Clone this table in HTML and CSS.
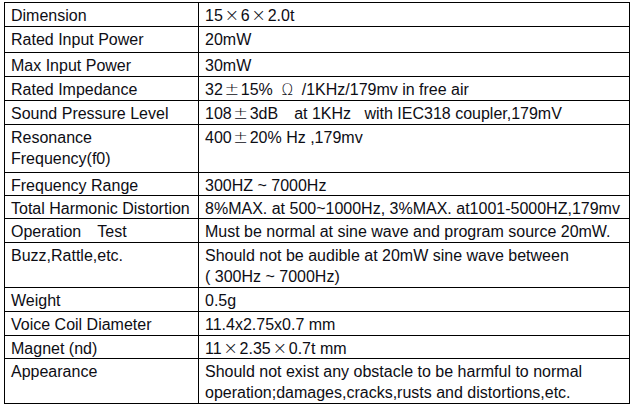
FILE: index.html
```html
<!DOCTYPE html>
<html lang="en">
<head>
<meta charset="utf-8">
<title>Specification</title>
<link rel="stylesheet" href="styles.css">
</head>
<body>
<div class="spec">
  <div class="cell r24">Dimension</div>
  <div class="cell r24">15<span class="fw">×</span>6<span class="fw">×</span>2.0t</div>

  <div class="cell r26">Rated Input Power</div>
  <div class="cell r26">20mW</div>

  <div class="cell r24">Max Input Power</div>
  <div class="cell r24">30mW</div>

  <div class="cell r24">Rated Impedance</div>
  <div class="cell r24">32<span class="fw">±</span>15% <span class="om">Ω</span> /1KHz/179mv in free air</div>

  <div class="cell r24">Sound Pressure Level</div>
  <div class="cell r24">108<span class="fw">±</span>3dB<span class="gap"></span>at 1KHz&nbsp;&nbsp; with IEC318 coupler,179mV</div>

  <div class="cell r48">Resonance<br>Frequency(f0)</div>
  <div class="cell r48">400<span class="fw">±</span>20% Hz ,179mv</div>

  <div class="cell r23">Frequency Range</div>
  <div class="cell r23">300HZ ~ 7000Hz</div>

  <div class="cell r23">Total Harmonic Distortion</div>
  <div class="cell r23">8%MAX. at 500~1000Hz, 3%MAX. at1001-5000HZ,179mv</div>

  <div class="cell r24">Operation<span class="gap"></span>Test</div>
  <div class="cell r24">Must be normal at sine wave and program source 20mW.</div>

  <div class="cell r45">Buzz,Rattle,etc.</div>
  <div class="cell r45">Should not be audible at 20mW sine wave between<br>( 300Hz ~ 7000Hz)</div>

  <div class="cell r24">Weight</div>
  <div class="cell r24">0.5g</div>

  <div class="cell r24">Voice Coil Diameter</div>
  <div class="cell r24">11.4x2.75x0.7 mm</div>

  <div class="cell r23">Magnet (nd)</div>
  <div class="cell r23">11<span class="fw">×</span>2.35<span class="fw">×</span>0.7t mm</div>

  <div class="cell r45">Appearance</div>
  <div class="cell r45">Should not exist any obstacle to be harmful to normal<br>operation;damages,cracks,rusts and distortions,etc.</div>
</div>
</body>
</html>
```

FILE: styles.css
```css
html, body {
  margin: 0;
  padding: 0;
  background: #ffffff;
}

body {
  font-family: "Liberation Sans", Arial, "Noto Sans CJK SC", sans-serif;
  font-size: 16px;
  line-height: 21px;
  color: #0d0d14;
}

.spec {
  display: grid;
  grid-template-columns: 194px 431px;
  width: 626px;
  margin: 2px 0 0 4px;
  border-top: 1px solid #000;
  border-left: 1px solid #000;
  box-sizing: border-box;
}

.cell {
  box-sizing: border-box;
  border-right: 1px solid #000;
  border-bottom: 1px solid #000;
  padding: 2px 4px 0 6px;
  white-space: nowrap;
  overflow: hidden;
}

.r23 { height: 23px; }
.r24 { height: 24px; }
.r26 { height: 26px; }
.r45 { height: 45px; }
.r48 { height: 48px; }

.fw {
  display: inline-block;
  width: 18px;
  text-align: center;
  font-family: "DejaVu Sans", sans-serif;
  font-weight: 200;
  font-size: 1.1em;
  line-height: 0;
}

.om {
  display: inline-block;
  width: 20px;
  text-align: center;
  font-family: "DejaVu Sans", sans-serif;
  font-weight: 200;
  font-size: 0.95em;
}

.gap {
  display: inline-block;
  width: 1em;
}
```
